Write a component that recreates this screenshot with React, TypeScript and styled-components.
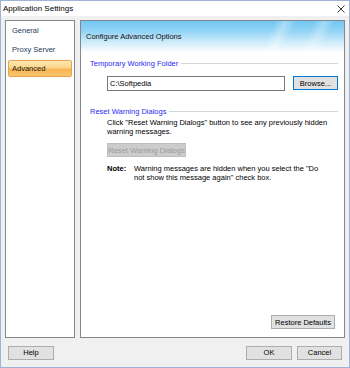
import React from "react";
import styled, {createGlobalStyle} from "styled-components";

const Global = createGlobalStyle`
  html, body {
    margin: 0;
    padding: 0;
    background: #ffffff;
  }
  * {
    box-sizing: border-box;
  }
`;

const Window = styled.div`
  display: flex;
  flex-direction: column;
  width: 350px;
  height: 368px;

  font-family: "Liberation Sans", Arial, sans-serif;
  font-size: 7.5px;
  color: #000;

  background: #f0f0f0;
  border: 1px solid #9db4d6;
`;

const TitleBar = styled.div`
  display: flex;
  align-items: center;
  justify-content: space-between;
  height: 15px;
  padding: 0 4px 0 2px;

  font-size: 8px;
  background: #ffffff;
`;

const Body = styled.div`
  flex: 1;
  display: flex;
  gap: 5px;
  padding: 4px 4px 0 4px;
`;

const NavList = styled.div`
  display: flex;
  flex-direction: column;
  gap: 2px;
  width: 70px;
  height: 318px;
  padding: 1px 2px 0;

  background: #ffffff;
  border: 1px solid #828790;
`;

const NavItem = styled.div<{ $active?: boolean }>`
  display: flex;
  align-items: center;
  height: 17px;
  padding-left: 3px;

  color: ${p => p.$active ? "#1a1a1a" : "#1e395b"};
  border: 1px solid ${p => p.$active ? "#e4a24e" : "transparent"};
  border-radius: 2px;
  background: ${p => p.$active
    ? "linear-gradient(to bottom, #fde9b4 0%, #fbd58a 45%, #f7b553 55%, #f9c46a 100%)"
    : "transparent"};
`;

const Panel = styled.div`
  display: flex;
  flex-direction: column;
  width: 265px;
  height: 318px;

  background: #ffffff;
  border: 1px solid #828790;
`;

const Header = styled.div`
  display: flex;
  align-items: center;
  height: 30px;
  padding-left: 5px;

  color: #101010;
  background:
    linear-gradient(115deg, transparent 70%, rgba(255,255,255,0.35) 74%, transparent 78%, transparent 84%, rgba(255,255,255,0.3) 88%, transparent 92%),
    linear-gradient(to bottom, #72c6f2 0%, #94d4f5 35%, #cdebfa 70%, #f6fbfe 100%);
`;

const Content = styled.div`
  flex: 1;
  display: flex;
  flex-direction: column;
  padding: 7px 6px 8px 9px;
`;

const GroupTitle = styled.div<{ $gap?: number }>`
  display: flex;
  align-items: center;
  gap: 3px;
  height: 10px;
  margin-top: ${p => p.$gap ?? 0}px;

  color: #2a2af0;

  &::after {
    content: '';
    flex: 1;
    height: 1px;
    background: #d5d5d5;
  }
`;

const Indent = styled.div`
  display: flex;
  flex-direction: column;
  align-items: flex-start;
  padding-left: 17px;
`;

const FolderRow = styled.div`
  display: flex;
  gap: 8px;
  margin-top: 8px;
`;

const TextBox = styled.div`
  display: flex;
  align-items: center;
  width: 178px;
  height: 15px;
  padding-left: 2px;

  background: #ffffff;
  border: 1px solid #7a7a7a;
`;

const Button = styled.div<{ $w: number; $focus?: boolean; $disabled?: boolean; $gap?: number }>`
  display: flex;
  align-items: center;
  justify-content: center;
  width: ${p => p.$w}px;
  height: 14px;
  margin-top: ${p => p.$gap ?? 0}px;

  color: ${p => p.$disabled ? "#9a9a9a" : "#000"};
  background: ${p => p.$disabled ? "#cccccc" : "#e1e1e1"};
  border: 1px solid ${p => p.$focus ? "#0078d7" : p.$disabled ? "#bfbfbf" : "#adadad"};
`;

const Paragraph = styled.div`
  margin-top: 2px;
  line-height: 9px;
`;

const NoteRow = styled.div`
  display: flex;
  margin-top: 7px;
  line-height: 9px;
`;

const NoteLabel = styled.span`
  width: 27px;
  flex-shrink: 0;
  font-weight: bold;
`;

const Spacer = styled.div`
  flex: 1;
`;

const BottomRight = styled.div`
  display: flex;
  justify-content: flex-end;
  padding-right: 3px;
`;

const Footer = styled.div`
  display: flex;
  align-items: center;
  gap: 5px;
  height: 29px;
  padding: 0 7px;
`;

const CloseIcon = () => (
  <svg width="8" height="8" viewBox="0 0 8 8">
    <path d="M0.5 0.5 L7.5 7.5 M7.5 0.5 L0.5 7.5" stroke="#222" strokeWidth="0.9" fill="none"/>
  </svg>
);

export default function App() {
  return (
    <>
      <Global/>
      <Window>
        <TitleBar>
          <span>Application Settings</span>
          <CloseIcon/>
        </TitleBar>
        <Body>
          <NavList>
            <NavItem>General</NavItem>
            <NavItem>Proxy Server</NavItem>
            <NavItem $active>Advanced</NavItem>
          </NavList>
          <Panel>
            <Header>Configure Advanced Options</Header>
            <Content>
              <GroupTitle>Temporary Working Folder</GroupTitle>
              <Indent>
                <FolderRow>
                  <TextBox>C:\Softpedia</TextBox>
                  <Button $w={45} $focus>Browse...</Button>
                </FolderRow>
              </Indent>
              <GroupTitle $gap={15}>Reset Warning Dialogs</GroupTitle>
              <Indent>
                <Paragraph>
                  Click "Reset Warning Dialogs" button to see any previously hidden<br/>
                  warning messages.
                </Paragraph>
                <Button $w={79} $disabled $gap={7}>Reset Warning Dialogs</Button>
                <NoteRow>
                  <NoteLabel>Note:</NoteLabel>
                  <span>
                    Warning messages are hidden when you select the "Do<br/>
                    not show this message again" check box.
                  </span>
                </NoteRow>
              </Indent>
              <Spacer/>
              <BottomRight>
                <Button $w={64}>Restore Defaults</Button>
              </BottomRight>
            </Content>
          </Panel>
        </Body>
        <Footer>
          <Button $w={46}>Help</Button>
          <Spacer/>
          <Button $w={46}>OK</Button>
          <Button $w={45}>Cancel</Button>
        </Footer>
      </Window>
    </>
  );
}
